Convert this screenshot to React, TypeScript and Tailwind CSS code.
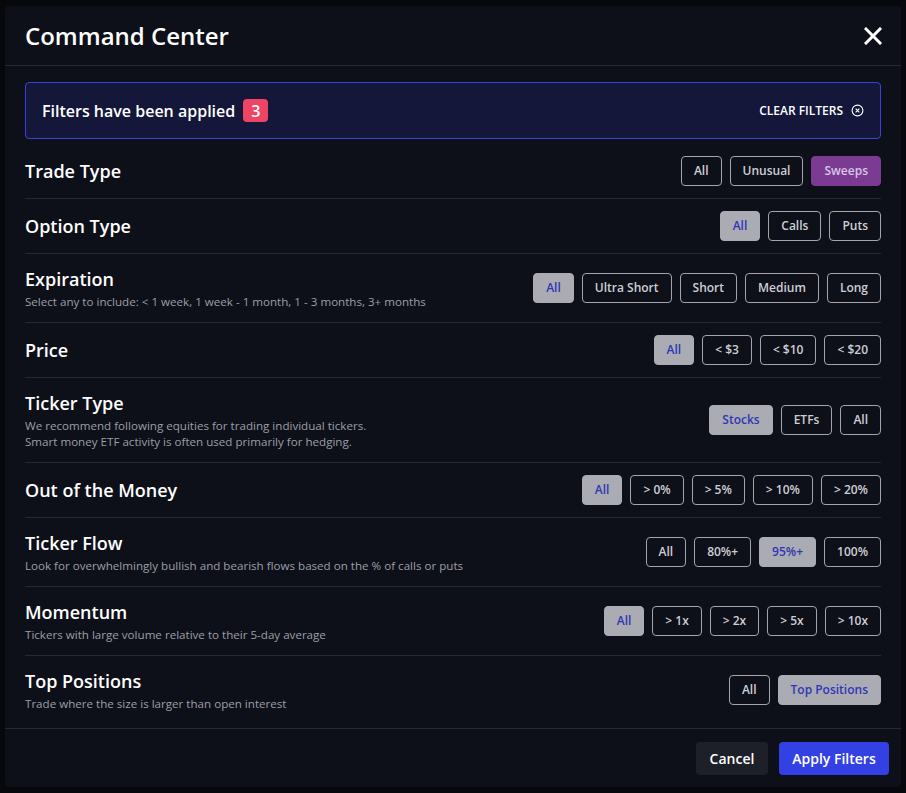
import React from "react";

type Opt = { label: string; state?: "active" | "purple" };
type Row = { title: string; sub?: string[]; opts: Opt[] };

const rows: Row[] = [
  { title: "Trade Type", opts: [{ label: "All" }, { label: "Unusual" }, { label: "Sweeps", state: "purple" }] },
  { title: "Option Type", opts: [{ label: "All", state: "active" }, { label: "Calls" }, { label: "Puts" }] },
  {
    title: "Expiration",
    sub: ["Select any to include: < 1 week, 1 week - 1 month, 1 - 3 months, 3+ months"],
    opts: [{ label: "All", state: "active" }, { label: "Ultra Short" }, { label: "Short" }, { label: "Medium" }, { label: "Long" }],
  },
  { title: "Price", opts: [{ label: "All", state: "active" }, { label: "< $3" }, { label: "< $10" }, { label: "< $20" }] },
  {
    title: "Ticker Type",
    sub: [
      "We recommend following equities for trading individual tickers.",
      "Smart money ETF activity is often used primarily for hedging.",
    ],
    opts: [{ label: "Stocks", state: "active" }, { label: "ETFs" }, { label: "All" }],
  },
  {
    title: "Out of the Money",
    opts: [{ label: "All", state: "active" }, { label: "> 0%" }, { label: "> 5%" }, { label: "> 10%" }, { label: "> 20%" }],
  },
  {
    title: "Ticker Flow",
    sub: ["Look for overwhelmingly bullish and bearish flows based on the % of calls or puts"],
    opts: [{ label: "All" }, { label: "80%+" }, { label: "95%+", state: "active" }, { label: "100%" }],
  },
  {
    title: "Momentum",
    sub: ["Tickers with large volume relative to their 5-day average"],
    opts: [{ label: "All", state: "active" }, { label: "> 1x" }, { label: "> 2x" }, { label: "> 5x" }, { label: "> 10x" }],
  },
  {
    title: "Top Positions",
    sub: ["Trade where the size is larger than open interest"],
    opts: [{ label: "All" }, { label: "Top Positions", state: "active" }],
  },
];

function Btn({ o }: { o: Opt }) {
  if (o.state === "active")
    return (
      <div className="px-3 py-1 border border-[#ababb3] bg-[#ababb3] rounded text-[12px] leading-5 font-semibold text-[#2f37b5]">
        {o.label}
      </div>
    );
  if (o.state === "purple")
    return (
      <div className="px-3 py-1 border border-[#7b3b93] bg-[#7b3b93] rounded text-[12px] leading-5 font-semibold text-[#d7c6e4]">
        {o.label}
      </div>
    );
  return (
    <div className="px-3 py-1 border border-[#a3a4ac] rounded text-[12px] leading-5 font-semibold text-[#cdced5]">
      {o.label}
    </div>
  );
}

export default function App() {
  return (
    <div
      className="w-[906px] h-[793px] bg-[#07080b] overflow-hidden pt-[6px] pl-[5px]"
      style={{ fontFamily: '"Open Sans", "Noto Sans", sans-serif' }}
    >
      <div className="w-[896px] h-[781px] bg-[#0e1019] rounded flex flex-col">
        <div className="h-[60px] flex items-center justify-between px-5 border-b border-[#262933]">
          <div className="text-[24px] font-semibold text-white leading-8">Command Center</div>
          <svg width="18" height="18" viewBox="0 0 18 18" className="mr-[-1px]">
            <path d="M2 2 L16 16 M16 2 L2 16" stroke="white" strokeWidth="3" strokeLinecap="square" />
          </svg>
        </div>
        <div className="px-5 pt-4 flex-1">
          <div className="h-[57px] border border-[#3a42dd] bg-[#14163a] rounded flex items-center justify-between pl-4 pr-4 mb-[5px]">
            <div className="flex items-center gap-2">
              <span className="text-[16px] font-semibold text-white">Filters have been applied</span>
              <span className="w-[25px] h-[23px] rounded-sm bg-[#ee4565] text-white text-[16px] font-semibold flex items-center justify-center">
                3
              </span>
            </div>
            <div className="flex items-center gap-2 text-white">
              <span className="text-[12px] font-semibold">CLEAR FILTERS</span>
              <svg width="13" height="13" viewBox="0 0 14 14">
                <circle cx="7" cy="7" r="5.8" fill="none" stroke="white" strokeWidth="1.2" />
                <path d="M5 5 L9 9 M9 5 L5 9" stroke="white" strokeWidth="1.2" />
              </svg>
            </div>
          </div>
          {rows.map((r, i) => (
            <div
              key={r.title}
              className={
                "flex items-center justify-between py-3 " +
                (i < rows.length - 1 ? "border-b border-[#262933]" : "")
              }
            >
              <div className="flex flex-col">
                <div className="text-[18px] font-semibold text-white leading-[26px]">{r.title}</div>
                {r.sub && (
                  <div className="mt-0.5">
                    {r.sub.map((s) => (
                      <div key={s} className="text-[11.6px] leading-4 text-[#9c9ea7]">
                        {s}
                      </div>
                    ))}
                  </div>
                )}
              </div>
              <div className="flex items-center gap-2">
                {r.opts.map((o, j) => (
                  <Btn key={j} o={o} />
                ))}
              </div>
            </div>
          ))}
        </div>
        <div className="border-t border-[#262933] flex justify-end gap-[11px] pl-3 pr-[12px] pt-[13px] pb-3">
          <div className="h-[33px] w-[72px] rounded bg-[#1e2029] text-white text-[14px] font-semibold flex items-center justify-center">
            Cancel
          </div>
          <div className="h-[33px] w-[110px] rounded bg-[#3340e3] text-white text-[14px] font-semibold flex items-center justify-center">
            Apply Filters
          </div>
        </div>
      </div>
    </div>
  );
}
